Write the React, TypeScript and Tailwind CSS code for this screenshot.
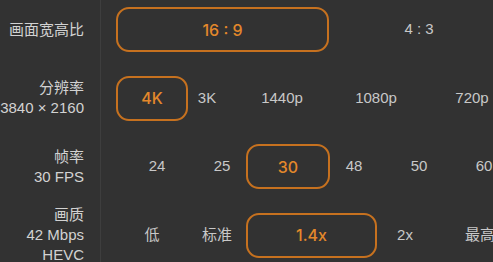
const font = { fontFamily: '"Liberation Sans", "Noto Sans CJK SC", sans-serif' };
const selFont = { fontFamily: 'Inter, "Liberation Sans", sans-serif' };

interface Opt {
  label: string;
  w: number;
  selected?: boolean;
}

interface Row {
  title: string[];
  options: Opt[];
}

const rows: Row[] = [
  {
    title: ['画面宽高比'],
    options: [
      { label: '16 : 9', w: 213, selected: true },
      { label: '4 : 3', w: 180 },
    ],
  },
  {
    title: ['分辨率', '3840 × 2160'],
    options: [
      { label: '4K', w: 72, selected: true },
      { label: '3K', w: 38 },
      { label: '1440p', w: 112 },
      { label: '1080p', w: 76 },
      { label: '720p', w: 116 },
    ],
  },
  {
    title: ['帧率', '30 FPS'],
    options: [
      { label: '24', w: 82 },
      { label: '25', w: 48 },
      { label: '30', w: 84, selected: true },
      { label: '48', w: 48 },
      { label: '50', w: 82 },
      { label: '60', w: 48 },
    ],
  },
  {
    title: ['画质', '42 Mbps', 'HEVC'],
    options: [
      { label: '低', w: 72 },
      { label: '标准', w: 58 },
      { label: '1.4x', w: 131, selected: true },
      { label: '2x', w: 56 },
      { label: '最高', w: 94 },
    ],
  },
];

export default function App() {
  return (
    <div className="w-[493px] h-[262px] overflow-hidden bg-[#323232] flex" style={font}>
      {/* Labels */}
      <div className="w-[101px] shrink-0 h-full border-r border-[#3e3e3e] flex flex-col pt-[7px] gap-[23.5px]">
        {rows.map((r, i) => (
          <div key={i} className="h-[45px] flex flex-col justify-center items-end pr-[16px]">
            {r.title.map((t) => (
              <div key={t} className="text-[15px] leading-[20px] text-[#d2d2d2] whitespace-nowrap">
                {t}
              </div>
            ))}
          </div>
        ))}
      </div>

      {/* Options */}
      <div className="flex-1 flex flex-col pt-[7px] pl-[15px] gap-[23.5px]">
        {rows.map((r, i) => (
          <div key={i} className="h-[45px] flex items-center">
            {r.options.map((o) =>
              o.selected ? (
                <div
                  key={o.label}
                  style={{ width: o.w, ...selFont }}
                  className="shrink-0 h-[45px] flex items-center justify-center rounded-[13px] border-2 border-[#c6711f] text-[#e3882b] text-[16px] font-medium whitespace-nowrap"
                >
                  {o.label}
                </div>
              ) : (
                <div
                  key={o.label}
                  style={{ width: o.w }}
                  className="shrink-0 h-[45px] flex items-center justify-center text-[#c8c8c8] text-[15px] whitespace-nowrap"
                >
                  {o.label}
                </div>
              )
            )}
          </div>
        ))}
      </div>
    </div>
  );
}
